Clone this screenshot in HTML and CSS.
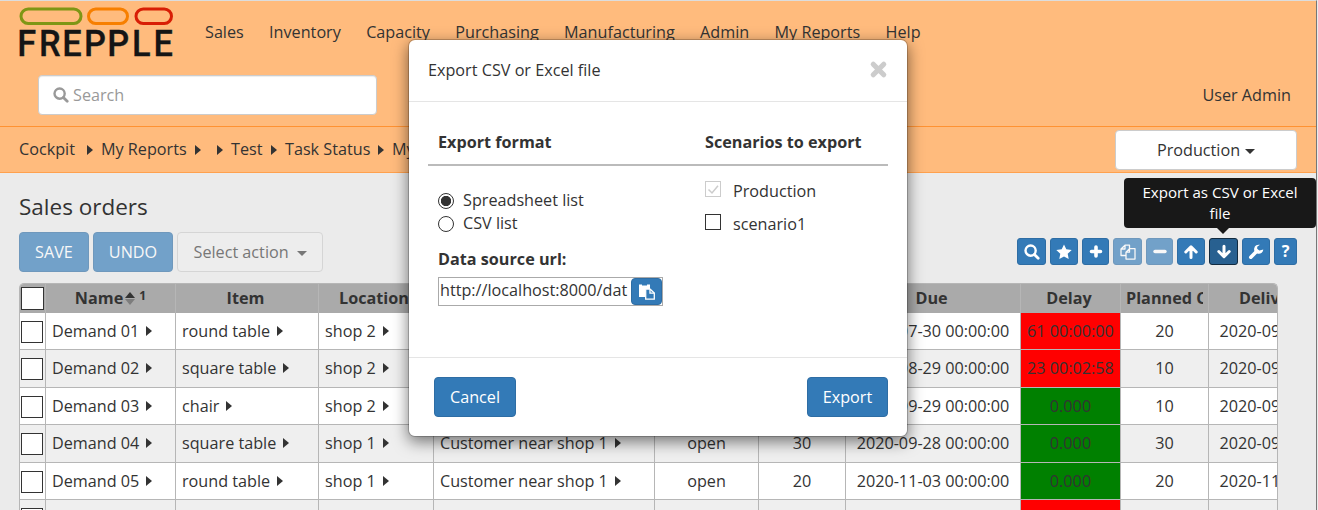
FILE: index.html
```html
<!DOCTYPE html>
<html lang="en">
<head>
<meta charset="utf-8">
<title>Sales orders</title>
<link rel="stylesheet" href="styles.css">
</head>
<body>
<svg class="defs" width="0" height="0">
  <symbol id="i-search" viewBox="0 0 16 16"><circle cx="6.6" cy="6.6" r="5.1" fill="none" stroke="currentColor" stroke-width="2.4"/><path d="M10.4 10.4L14.2 14.2" stroke="currentColor" stroke-width="2.8" stroke-linecap="round"/></symbol>
  <symbol id="i-star" viewBox="0 0 16 16"><path fill="currentColor" d="M8 .4l2.300 4.900 5.400.7-4 3.700 1 5.400L8 12.500 3.300 15.100l1-5.400L.3 6l5.400-.7z"/></symbol>
  <symbol id="i-plus" viewBox="0 0 16 16"><path d="M8 3v9M3.500 7.500h9" stroke="currentColor" stroke-width="3.600" stroke-linecap="round"/></symbol>
  <symbol id="i-minus" viewBox="0 0 16 16"><path d="M3 7.500h10" stroke="currentColor" stroke-width="3.400" stroke-linecap="round"/></symbol>
  <symbol id="i-copy" viewBox="0 0 16 16"><path fill="none" stroke="currentColor" stroke-width="1.300" stroke-linejoin="round" d="M6 11.500H1V5l4-3.800h4.500v3.300M5 1.500V5H1M6 8.200l3.500-3.600H15v10.500H6zM9.500 4.800v3.400H6"/></symbol>
  <symbol id="i-up" viewBox="0 0 16 16"><path fill="none" stroke="currentColor" stroke-width="3" stroke-linecap="round" stroke-linejoin="round" d="M8 13.500V3.500M2.800 8L8 2.800 13.200 8"/></symbol>
  <symbol id="i-down" viewBox="0 0 16 16"><path fill="none" stroke="currentColor" stroke-width="3" stroke-linecap="round" stroke-linejoin="round" d="M8 2.200v9.800M2.800 7.500L8 12.700 13.200 7.500"/></symbol>
  <symbol id="i-wrench" viewBox="0 0 16 16"><path d="M2.800 13.200L9 7" stroke="currentColor" stroke-width="3.600" stroke-linecap="round"/><path fill="currentColor" d="M15.300 5.400a4.600 4.600 0 1 1-3.400-4.600l-2.700 2v2.500l2.200 1.200z"/></symbol>
  <symbol id="i-paste" viewBox="0 0 16 16"><path fill="currentColor" d="M0 .5h3v1h5v-1h3V5H6v8H0z"/><path fill="#337ab7" stroke="currentColor" stroke-width="1.300" d="M6.700 5.200h4.500L15.300 9v6.200H6.700z"/><path fill="none" stroke="currentColor" stroke-width="1.300" d="M11 5.200v4h4.300"/></symbol>
  <symbol id="i-close" viewBox="0 0 18 18"><path d="M4.500 4.500l9 9M13.500 4.500l-9 9" stroke="currentColor" stroke-width="4.400" stroke-linecap="round"/></symbol>
</svg>

<div class="page">
  <header class="top">
    <div class="nav">
      <svg class="logo" width="156" height="52" viewBox="0 0 156 52">
        <g fill="none" stroke-width="3">
          <rect x="2" y="2" width="60" height="14.500" rx="7.200" stroke="#7f9614"/>
          <rect x="69.500" y="2" width="39" height="14.500" rx="7.200" stroke="#f77f00"/>
          <rect x="117" y="2" width="35.500" height="14.500" rx="7.200" stroke="#d81e05"/>
        </g>
        <text class="logo-text" transform="scale(.93 1)" y="49" x="-2 21.500 46.500 70 95 121.500 144.500">FREPPLE</text>
      </svg>
      <nav class="menu"><a>Sales</a><a>Inventory</a><a>Capacity</a><a>Purchasing</a><a>Manufacturing</a><a>Admin</a><a>My Reports</a><a>Help</a></nav>
    </div>
    <div class="tools">
      <div class="search"><svg width="16" height="16"><use href="#i-search"/></svg><span>Search</span></div>
      <span class="user">User Admin</span>
    </div>
  </header>

  <div class="crumbs">
    <div class="trail">
      <a style="width:64px">Cockpit</a><i class="tri"></i>
      <a style="width:90px">My Reports</a><i class="tri"></i>
      <a style="width:4px"></a><i class="tri"></i>
      <a style="width:36px">Test</a><i class="tri"></i>
      <a style="width:89px">Task Status</a><i class="tri"></i>
      <a>My</a>
    </div>
    <div class="scenario">Production<i class="caret"></i></div>
  </div>

  <main>
    <h1>Sales orders</h1>
    <div class="bar">
      <button class="btn off save">SAVE</button>
      <button class="btn off undo">UNDO</button>
      <button class="select">Select action<i class="caret"></i></button>
      <div class="icons">
        <span class="ib w29"><svg width="16" height="16"><use href="#i-search"/></svg></span>
        <span class="ib w28"><svg width="16" height="16"><use href="#i-star"/></svg></span>
        <span class="ib w27"><svg width="16" height="16"><use href="#i-plus"/></svg></span>
        <span class="ib w29 off"><svg width="16" height="16"><use href="#i-copy"/></svg></span>
        <span class="ib w27 off"><svg width="16" height="16"><use href="#i-minus"/></svg></span>
        <span class="ib w28"><svg width="16" height="16"><use href="#i-up"/></svg></span>
        <span class="ib w29 active"><svg width="16" height="16"><use href="#i-down"/></svg><span class="tip">Export as CSV or Excel file</span></span>
        <span class="ib w28"><svg width="16" height="16"><use href="#i-wrench"/></svg></span>
        <span class="ib w23"><b>?</b></span>
      </div>
    </div>

    <div class="grid">
      <div class="row head">
        <div class="c box"><i class="cb"></i></div><div class="c name">Name<span class="sort"><i></i><i></i></span><sup>1</sup></div><div class="c item">Item</div><div class="c loc">Location</div><div class="c"></div><div class="c"></div><div class="c"></div><div class="c due">Due</div><div class="c delay">Delay</div><div class="c plan"><span>Planned C</span></div><div class="c deliv">Delivery</div>
      </div>
      <div class="row">
        <div class="c box"><i class="cb"></i></div><div class="c l">Demand 01<i class="tri"></i></div><div class="c l">round table<i class="tri"></i></div><div class="c l">shop 2<i class="tri"></i></div><div class="c"></div><div class="c"></div><div class="c"></div><div class="c">2020-07-30 00:00:00</div><div class="c late">61 00:00:00</div><div class="c">20</div><div class="c date">2020-09-29</div>
      </div>
      <div class="row alt">
        <div class="c box"><i class="cb"></i></div><div class="c l">Demand 02<i class="tri"></i></div><div class="c l">square table<i class="tri"></i></div><div class="c l">shop 2<i class="tri"></i></div><div class="c"></div><div class="c"></div><div class="c"></div><div class="c">2020-08-29 00:00:00</div><div class="c late">23 00:02:58</div><div class="c">10</div><div class="c date">2020-09-21</div>
      </div>
      <div class="row">
        <div class="c box"><i class="cb"></i></div><div class="c l">Demand 03<i class="tri"></i></div><div class="c l">chair<i class="tri"></i></div><div class="c l">shop 2<i class="tri"></i></div><div class="c"></div><div class="c"></div><div class="c"></div><div class="c">2020-09-29 00:00:00</div><div class="c ok">0.000</div><div class="c">10</div><div class="c date">2020-09-29</div>
      </div>
      <div class="row alt">
        <div class="c box"><i class="cb"></i></div><div class="c l">Demand 04<i class="tri"></i></div><div class="c l">square table<i class="tri"></i></div><div class="c l">shop 1<i class="tri"></i></div><div class="c l">Customer near shop 1<i class="tri"></i></div><div class="c">open</div><div class="c">30</div><div class="c">2020-09-28 00:00:00</div><div class="c ok">0.000</div><div class="c">30</div><div class="c date">2020-09-28</div>
      </div>
      <div class="row">
        <div class="c box"><i class="cb"></i></div><div class="c l">Demand 05<i class="tri"></i></div><div class="c l">round table<i class="tri"></i></div><div class="c l">shop 1<i class="tri"></i></div><div class="c l">Customer near shop 1<i class="tri"></i></div><div class="c">open</div><div class="c">20</div><div class="c">2020-11-03 00:00:00</div><div class="c ok">0.000</div><div class="c">20</div><div class="c date">2020-11-03</div>
      </div>
      <div class="row alt">
        <div class="c box"><i class="cb"></i></div><div class="c"></div><div class="c"></div><div class="c"></div><div class="c"></div><div class="c"></div><div class="c"></div><div class="c"></div><div class="c late"></div><div class="c"></div><div class="c"></div>
      </div>
    </div>
  </main>
</div>

<div class="modal">
  <div class="m-head"><span>Export CSV or Excel file</span><svg width="21" height="21"><use href="#i-close"/></svg></div>
  <div class="m-body">
    <div class="m-cols titles"><b>Export format</b><b>Scenarios to export</b></div>
    <div class="m-cols">
      <div class="formats">
        <label><i class="radio on"></i>Spreadsheet list</label>
        <label><i class="radio"></i>CSV list</label>
        <b>Data source url:</b>
        <div class="url"><span>http://localhost:8000/dat</span><button class="btn"><svg width="16" height="16"><use href="#i-paste"/></svg></button></div>
      </div>
      <div class="scens">
        <label><svg class="chk dis" width="16" height="16"><path d="M2.500 7.500l3.500 3.500L12 3.800" fill="none" stroke="currentColor" stroke-width="1.500"/></svg>Production</label>
        <label><svg class="chk" width="16" height="16"></svg>scenario1</label>
      </div>
    </div>
  </div>
  <div class="m-foot"><button class="btn cancel">Cancel</button><button class="btn export">Export</button></div>
</div>
</body>
</html>
```
FILE: styles.css
```css
* { box-sizing: border-box; }
body {
  margin: 0;
  height: 510px;
  overflow: hidden;
  background: #ebebeb;
  color: #333;
  font: 16.200px/23px "Open Sans", "Noto Sans", sans-serif;
}
button { font: inherit; margin: 0; padding: 0; }
svg { display: block; flex: none; }
.defs { position: absolute; }
.page {
  width: 1317px;
  height: 510px;
  overflow: hidden;
  border-top: 1px solid #ddd;
  border-right: 1px solid #777;
}

/* header */
.top { height: 126px; background: #ffbb7d; border-bottom: 1px solid #ff9232; }
.nav { display: flex; height: 74px; padding-left: 19px; }
.logo { margin-top: 6px; overflow: visible; }
.logo-text { font: 500 37px Roboto, sans-serif; fill: #151515; stroke: #151515; stroke-width: .3; }
.menu { display: flex; gap: 25.300px; padding: 20px 0 0 30px; }
.tools { display: flex; align-items: center; justify-content: space-between; padding: 0 25px 0 38px; }
.search {
  display: flex; align-items: center; gap: 4px;
  width: 339px; height: 40px; padding-left: 14px;
  background: #fff; border: 1px solid #ccc; border-radius: 4px;
  box-shadow: inset 0 1px 1px rgba(0,0,0,.075);
  color: #999;
}
.crumbs {
  display: flex; align-items: center; justify-content: space-between;
  height: 46px; padding: 0 19px;
  background: #ffbb7d; border-bottom: 1px solid #ffa14e;
}
.trail { display: flex; align-items: center; white-space: nowrap; }
.trail .tri { margin: 0 8px 0 4px; }
.tri {
  display: inline-block; flex: none;
  border: solid transparent; border-width: 5.500px 0 5.500px 6px; border-left-color: #333;
}
.caret {
  display: inline-block; flex: none; margin: 2px 0 0 5px;
  border: solid transparent; border-width: 5px 5px 0; border-top-color: currentColor;
}
.scenario {
  display: flex; align-items: center; justify-content: center;
  width: 182px; height: 40px; margin-top: 1px;
  background: #fff; border: 1px solid #ccc; border-radius: 4px;
}

/* title and toolbar */
main { padding: 0 0 0 19px; }
h1 { margin: 0; padding-top: 18px; height: 59px; font-size: 22.500px; font-weight: 400; line-height: 32px; }
.bar { display: flex; height: 51px; }
.btn {
  height: 40px; color: #fff;
  background: #337ab7; border: 1px solid #2e6da4; border-radius: 4px;
}
.off { opacity: .65; }
.save { width: 70px; margin-right: 4px; }
.undo { width: 80px; margin-right: 4px; }
.select {
  display: flex; align-items: center; width: 146px; height: 40px; padding-left: 15.500px;
  color: #777; background: #ededed; border: 1px solid #d5d5d5; border-radius: 4px;
}
.select .caret { margin-left: 8px; margin-top: 2px; }
.icons { display: flex; gap: 4px; margin: 6px 0 0 694px; }
.ib {
  position: relative; display: flex; align-items: center; justify-content: center;
  height: 27px; color: #fff;
  background: #337ab7; border: 1px solid #2e6da4; border-radius: 3px;
}
.w23 { width: 23px; } .w27 { width: 27px; } .w28 { width: 28px; } .w29 { width: 29px; }
.active { background: #286090; border-color: #122b40; }
.tip {
  position: absolute; left: -86px; bottom: 36px; width: 192px; height: 50px;
  padding: 4px 16px 0; text-align: center; font-size: 15.100px; line-height: 21px;
  background: #181818; border-radius: 4px;
}
.tip::after {
  content: ""; position: absolute; left: 93px; top: 50px;
  border: solid transparent; border-width: 6px 6px 0; border-top-color: #181818;
}

/* data grid */
.grid {
  width: 1259px; height: 240px; overflow: hidden;
  border: solid #b6b6b6; border-width: 1px 1px 0;
  border-radius: 5px 5px 0 0;
}
.row {
  display: grid;
  grid-template-columns: 26px 130px 143px 115px 221px 104px 87px 175px 100px 88px 120px;
  height: 37px; background: #fff;
}
.row.alt { height: 38px; background: #efefef; }
.row.head { height: 29px; background: #aaa; font-weight: 700; }
.c {
  display: flex; align-items: center; justify-content: center;
  min-width: 0; overflow: hidden; white-space: nowrap;
  border: solid #b6b6b6; border-width: 0 1px 1px 0;
}
.head .c { border-bottom: 0; }
.c.l { justify-content: flex-start; padding-left: 6px; }
.c .tri { margin-left: 7px; margin-top: -1px; }
.c.box { justify-content: flex-start; padding: 1px 0 0 1px; }
.c.item, .c.due, .c.delay { padding-right: 3px; }
.c.loc { padding-right: 4px; }
.cb { width: 22px; height: 22px; border: 1px solid #333; background: #fff; }
.head .cb { width: 23px; height: 23px; margin-top: -1px; }
.late { background: red; }
.ok { background: green; }
.date { justify-content: flex-start; padding-left: 10.500px; }
.deliv { justify-content: flex-start; padding-left: 30px; }
.plan { justify-content: flex-start; padding: 0 5px; }
.plan span { overflow: hidden; }
.sort { display: flex; flex-direction: column; gap: 1px; margin: 0 4px 0 2px; }
.sort i { border: solid transparent; border-width: 0 5.500px 6px; border-bottom-color: #333; }
.sort i + i { border-width: 6px 5.500px 0; border-top-color: #7d7d7d; }
sup { font-size: 12px; line-height: 12px; margin-top: -6px; }

/* export dialog */
.modal {
  position: absolute; left: 408px; top: 39px; width: 500px; height: 398px;
  background: #fff; background-clip: padding-box;
  border: 1px solid rgba(0,0,0,.2); border-radius: 7px;
  box-shadow: 0 5px 15px rgba(0,0,0,.5);
}
.m-head {
  display: flex; align-items: center; justify-content: space-between;
  height: 62px; padding: 0 18px 0 19px; border-bottom: 1px solid #e5e5e5; color: #333;
}
.m-head svg { color: #ccc; margin-top: -3px; }
.m-body { height: 255px; padding: 19px; }
.m-cols { display: grid; grid-template-columns: 267px 1fr; padding-left: 10px; }
.titles { width: 460px; height: 45px; padding-top: 10px; border-bottom: 2px solid #bbb; }
.formats { padding-top: 23px; }
.formats label { display: flex; align-items: center; height: 23px; }
.formats b { display: block; margin-top: 13px; }
.radio {
  width: 16px; height: 16px; margin-right: 9px;
  border: 1px solid #333; border-radius: 50%; background: #fff;
}
.radio.on { background: radial-gradient(circle, #333 4.800px, #fff 5.500px); }
.url {
  display: flex; width: 225px; height: 29px; margin-top: 6px;
  border: 1px solid #aaa;
}
.url span { width: 192px; padding: 1px 0 0 1px; white-space: nowrap; }
.url .btn { display: flex; align-items: center; justify-content: center; width: 31px; height: 27px; }
.scens { padding-top: 10px; }
.scens label { display: flex; align-items: center; height: 33px; margin-top: -3px; margin-bottom: 3px; padding-top: 3px; }
.chk { border: 1px solid #333; margin: -5px 12px 0 0; }
.dis { color: #ccc; border-color: #ccc; }
.m-foot {
  display: flex; justify-content: space-between;
  padding: 19px 19px 0 25px; border-top: 1px solid #e5e5e5;
}
.cancel { width: 82px; }
.export { width: 81px; }
```
